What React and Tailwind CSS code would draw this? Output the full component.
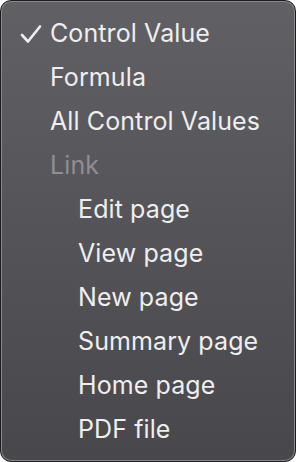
import React from 'react';

const items = [
  { label: 'Control Value', checked: true },
  { label: 'Formula' },
  { label: 'All Control Values' },
  { label: 'Link', disabled: true },
  { label: 'Edit page', indent: true },
  { label: 'View page', indent: true },
  { label: 'New page', indent: true },
  { label: 'Summary page', indent: true },
  { label: 'Home page', indent: true },
  { label: 'PDF file', indent: true },
];

const App = () => {
  return (
    <div className="w-[296px] h-[462px] bg-white">
      <div
        className="w-full h-full rounded-[11px] border border-[#1c1c1e] bg-gradient-to-b from-[#616064] to-[#48474b] shadow-[inset_0_0_0_1px_#8a898d] pt-[11px] text-[25px] tracking-[0.1px] text-[#eeeeee]"
        style={{ fontFamily: 'Inter, "Noto Sans", sans-serif' }}
      >
        {items.map((item) => (
          <div key={item.label} className="relative h-[44px] flex items-center">
            {item.checked && (
              <span className="absolute left-[19px] top-[12px]">
                <svg width="22" height="20" viewBox="0 0 22 20" fill="none">
                  <path d="M2 11 L8 17.5 L20 2.5" stroke="#eeeeee" strokeWidth="2.6" strokeLinecap="round" strokeLinejoin="round" />
                </svg>
              </span>
            )}
            <span
              className={`${item.indent ? 'pl-[77px]' : 'pl-[49px]'} ${
                item.disabled ? 'text-[#8f8e92]' : ''
              }`}
            >
              {item.label}
            </span>
          </div>
        ))}
      </div>
    </div>
  );
};

export default App;
